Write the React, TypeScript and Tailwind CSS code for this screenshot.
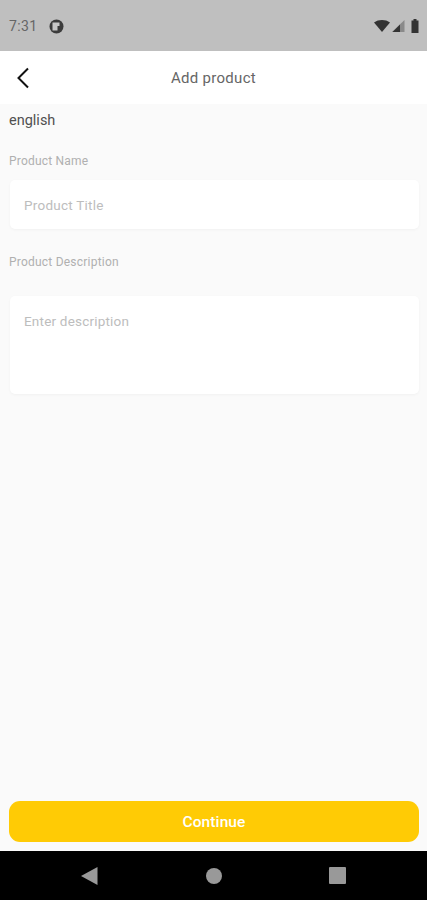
export default function App() {
  return (
    <div className="flex h-[900px] w-[427px] flex-col overflow-hidden bg-[#fafafa] font-['Roboto',sans-serif]">
      {/* status bar */}
      <div className="flex h-[51px] shrink-0 items-center justify-between bg-[#bfbfbf] pl-[9px] pr-[8px] pt-[1px]">
        <div className="flex items-center gap-[12px]">
          <span className="text-[14px] tracking-[0.4px] text-[#666]">7:31</span>
          <svg width="15" height="15" viewBox="0 0 15 15" className="-ml-[1px]">
            <circle cx="7.5" cy="7.5" r="7" fill="#3c3c3c" />
            <path d="M3.500 3.500h7v3.500H8.500v4.500H3.500z" fill="#c8c8c8" />
          </svg>
        </div>
        <div className="flex items-center gap-[2px]">
          <svg width="16" height="12" viewBox="0 0 16 12">
            <path d="M0 2.5C4.5-.8 11.5-.8 16 2.5L8 12z" fill="#333" />
          </svg>
          <svg width="13" height="12" viewBox="0 0 13 12">
            <path d="M12.5 0v12H0z" fill="#8a8a8a" />
            <path d="M8 4.5V12H0.5z" fill="#333" />
          </svg>
          <svg width="8" height="14" viewBox="0 0 8 14" className="ml-[4px]">
            <path d="M2.500 0h3v1.500H7.500V14H.5V1.500h2z" fill="#333" />
          </svg>
        </div>
      </div>

      {/* header */}
      <div className="relative flex h-[53px] shrink-0 items-center justify-center bg-white pt-[1px]">
        <svg width="14" height="22" viewBox="0 0 14 22" className="absolute left-[16px] top-[16px]">
          <path d="M12 1.500 2.500 11 12 20.500" fill="none" stroke="#111" strokeWidth="2" />
        </svg>
        <span className="text-[15px] tracking-[0.3px] text-[#666]">Add product</span>
      </div>

      {/* form */}
      <div className="flex flex-1 flex-col pl-[9px] pr-[8px]">
        <div className="mt-[8px] text-[14.500px] leading-[18px] text-[#505050]">english</div>
        <div className="mt-[24px] text-[12px] leading-[14px] tracking-[0.2px] text-[#b0b0b0]">Product Name</div>
        <div className="ml-[1px] mt-[12px] flex h-[49px] items-center rounded-[5px] bg-white pl-[14px] pt-[2px] text-[13.500px] tracking-[0.25px] text-[#bdbdbd] shadow-[0_1px_3px_rgba(0,0,0,0.04)]">
          Product Title
        </div>
        <div className="mt-[26px] text-[12px] leading-[14px] tracking-[0.22px] text-[#b0b0b0]">Product Description</div>
        <div className="ml-[1px] mt-[27px] h-[98px] rounded-[5px] bg-white pl-[14px] pt-[16px] text-[13.500px] leading-[18px] tracking-[0.2px] text-[#bdbdbd] shadow-[0_1px_3px_rgba(0,0,0,0.04)]">
          Enter description
        </div>
        <div className="mt-auto mb-[9px] flex h-[41px] items-center justify-center rounded-[11px] bg-[#ffcb05] pt-[3px] text-[15.500px] font-medium tracking-[0.1px] text-white">
          Continue
        </div>
      </div>

      {/* nav bar */}
      <div className="flex h-[49px] shrink-0 items-center justify-between bg-black px-[81px]">
        <svg width="17" height="18" viewBox="0 0 17 18">
          <path d="M16.500 0v18L0 9z" fill="#999" />
        </svg>
        <div className="h-[16px] w-[16px] rounded-full bg-[#999]" />
        <div className="h-[17px] w-[17px] rounded-[1px] bg-[#999]" />
      </div>
    </div>
  );
}
